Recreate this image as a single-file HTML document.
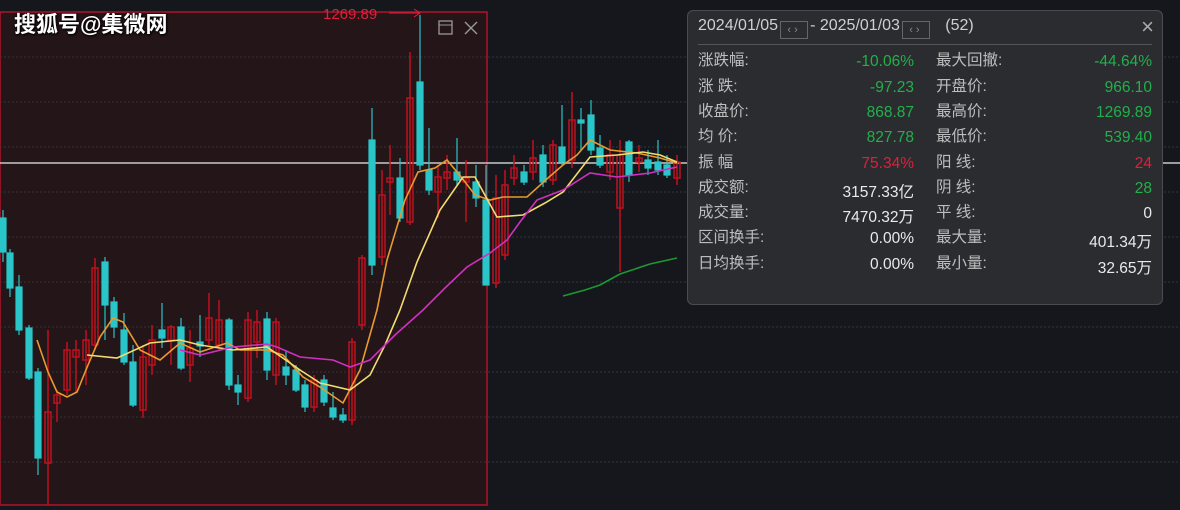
<!DOCTYPE html>
<html><head><meta charset="utf-8"><style>
body{margin:0;width:1180px;height:510px;background:#15171c;overflow:hidden;position:relative;font-family:"Liberation Sans","Noto Sans CJK SC",sans-serif}
svg{position:absolute;left:0;top:0}
.wm{position:absolute;left:14px;top:7px;color:#fff;font-size:22px;font-weight:bold;text-shadow:0 0 2px #000,1px 1px 2px #000}
.panel{position:absolute;left:687px;top:10px;width:476px;height:295px;background:#2b2c30;border:1px solid #4a4b50;border-radius:6px;box-sizing:border-box;color:#c8c8c8}
.hd{position:absolute;left:10px;top:6px;font-size:16px;color:#cfcfcf;white-space:nowrap}
.btn{display:inline-block;width:28px;height:18px;border:1px solid #666;vertical-align:-3px;font-size:11px;color:#888;text-align:center;line-height:16px;box-sizing:border-box;margin:0 2px;letter-spacing:3px}
.sep{position:absolute;left:10px;right:10px;top:33px;height:1px;background:#555}
.x{position:absolute;right:8px;top:3px;font-size:22px;color:#aaa}
.r{position:absolute;font-size:15.5px;white-space:nowrap}
.l{color:#bdbdbd}
.g{color:#22b04a}.red{color:#e0203a}.w{color:#eaeaea}
</style></head><body>
<svg width="1180" height="510">
<rect x="0" y="12" width="487" height="493" fill="#231518" stroke="#b0142a" stroke-width="1.5"/>
<g stroke="#33343a" stroke-dasharray="2 2" stroke-width="1">
<line x1="0" y1="57" x2="1180" y2="57"/><line x1="0" y1="102" x2="1180" y2="102"/><line x1="0" y1="147" x2="1180" y2="147"/><line x1="0" y1="192" x2="1180" y2="192"/><line x1="0" y1="237" x2="1180" y2="237"/><line x1="0" y1="282" x2="1180" y2="282"/><line x1="0" y1="327" x2="1180" y2="327"/><line x1="0" y1="372" x2="1180" y2="372"/><line x1="0" y1="417" x2="1180" y2="417"/><line x1="0" y1="462" x2="1180" y2="462"/>
</g>
<line x1="0" y1="163" x2="1180" y2="163" stroke="#c8c8c8" stroke-width="1.5"/>
<text x="323" y="19" fill="#e0203a" font-size="15" font-family="Liberation Sans">1269.89</text>
<line x1="389" y1="13" x2="420" y2="13" stroke="#e0203a"/><path d="M414 9 L420 13 L414 17" stroke="#e0203a" fill="none"/>
<rect x="439" y="21" width="13" height="13" fill="none" stroke="#999" stroke-width="1.3"/><line x1="439" y1="25" x2="452" y2="25" stroke="#999"/>
<path d="M465 22 L477 34 M477 22 L465 34" stroke="#999" stroke-width="1.4"/>
<g stroke="#2ac5c8" fill="#2ac5c8" stroke-width="1.2">
<line x1="3" y1="210" x2="3" y2="262"/><rect x="0" y="218" width="6" height="34"/>
<line x1="10" y1="249" x2="10" y2="297"/><rect x="7" y="253" width="6" height="35"/>
<line x1="19" y1="275" x2="19" y2="335"/><rect x="16" y="287" width="6" height="43"/>
<line x1="29" y1="325" x2="29" y2="380"/><rect x="26" y="328" width="6" height="50"/>
<line x1="38" y1="368" x2="38" y2="475"/><rect x="35" y="372" width="6" height="86"/>
<line x1="105" y1="257" x2="105" y2="340"/><rect x="102" y="262" width="6" height="43"/>
<line x1="114" y1="297" x2="114" y2="338"/><rect x="111" y="302" width="6" height="25"/>
<line x1="124" y1="313" x2="124" y2="365"/><rect x="121" y="330" width="6" height="32"/>
<line x1="133" y1="345" x2="133" y2="407"/><rect x="130" y="362" width="6" height="43"/>
<line x1="162" y1="303" x2="162" y2="348"/><rect x="159" y="330" width="6" height="8"/>
<line x1="181" y1="318" x2="181" y2="370"/><rect x="178" y="327" width="6" height="41"/>
<line x1="200" y1="315" x2="200" y2="357"/><rect x="197" y="342" width="6" height="4"/>
<line x1="229" y1="318" x2="229" y2="390"/><rect x="226" y="320" width="6" height="65"/>
<line x1="238" y1="375" x2="238" y2="405"/><rect x="235" y="385" width="6" height="7"/>
<line x1="267" y1="312" x2="267" y2="380"/><rect x="264" y="319" width="6" height="51"/>
<line x1="286" y1="350" x2="286" y2="385"/><rect x="283" y="367" width="6" height="8"/>
<line x1="296" y1="365" x2="296" y2="392"/><rect x="293" y="370" width="6" height="20"/>
<line x1="305" y1="380" x2="305" y2="412"/><rect x="302" y="385" width="6" height="22"/>
<line x1="324" y1="375" x2="324" y2="406"/><rect x="321" y="380" width="6" height="22"/>
<line x1="333" y1="392" x2="333" y2="420"/><rect x="330" y="408" width="6" height="9"/>
<line x1="343" y1="408" x2="343" y2="423"/><rect x="340" y="415" width="6" height="5"/>
<line x1="372" y1="108" x2="372" y2="275"/><rect x="369" y="140" width="6" height="125"/>
<line x1="400" y1="158" x2="400" y2="222"/><rect x="397" y="178" width="6" height="40"/>
<line x1="420" y1="15" x2="420" y2="170"/><rect x="417" y="82" width="6" height="83"/>
<line x1="429" y1="128" x2="429" y2="195"/><rect x="426" y="170" width="6" height="20"/>
<line x1="457" y1="138" x2="457" y2="185"/><rect x="454" y="172" width="6" height="8"/>
<line x1="476" y1="165" x2="476" y2="207"/><rect x="473" y="182" width="6" height="16"/>
<line x1="486" y1="165" x2="486" y2="285"/><rect x="483" y="200" width="6" height="85"/>
<line x1="524" y1="165" x2="524" y2="185"/><rect x="521" y="172" width="6" height="10"/>
<line x1="543" y1="145" x2="543" y2="187"/><rect x="540" y="155" width="6" height="27"/>
<line x1="562" y1="105" x2="562" y2="165"/><rect x="559" y="147" width="6" height="15"/>
<line x1="581" y1="108" x2="581" y2="150"/><rect x="578" y="120" width="6" height="3"/>
<line x1="591" y1="100" x2="591" y2="155"/><rect x="588" y="115" width="6" height="35"/>
<line x1="600" y1="135" x2="600" y2="168"/><rect x="597" y="148" width="6" height="17"/>
<line x1="629" y1="140" x2="629" y2="182"/><rect x="626" y="142" width="6" height="33"/>
<line x1="648" y1="150" x2="648" y2="175"/><rect x="645" y="160" width="6" height="8"/>
<line x1="658" y1="140" x2="658" y2="175"/><rect x="655" y="162" width="6" height="8"/>
<line x1="667" y1="155" x2="667" y2="178"/><rect x="664" y="165" width="6" height="10"/>
</g>
<g stroke="#c0101f" fill="none" stroke-width="1.5">
<line x1="48" y1="330" x2="48" y2="505"/><rect x="45" y="412" width="6" height="51"/>
<line x1="57" y1="390" x2="57" y2="422"/><rect x="54" y="395" width="6" height="8"/>
<line x1="67" y1="342" x2="67" y2="395"/><rect x="64" y="350" width="6" height="40"/>
<line x1="76" y1="340" x2="76" y2="392"/><rect x="73" y="350" width="6" height="7"/>
<line x1="86" y1="330" x2="86" y2="385"/><rect x="83" y="340" width="6" height="20"/>
<line x1="95" y1="258" x2="95" y2="350"/><rect x="92" y="268" width="6" height="77"/>
<line x1="143" y1="345" x2="143" y2="418"/><rect x="140" y="357" width="6" height="53"/>
<line x1="152" y1="325" x2="152" y2="375"/><rect x="149" y="340" width="6" height="25"/>
<line x1="171" y1="325" x2="171" y2="365"/><rect x="168" y="327" width="6" height="13"/>
<line x1="190" y1="330" x2="190" y2="382"/><rect x="187" y="348" width="6" height="17"/>
<line x1="209" y1="293" x2="209" y2="345"/><rect x="206" y="318" width="6" height="22"/>
<line x1="219" y1="300" x2="219" y2="350"/><rect x="216" y="320" width="6" height="25"/>
<line x1="248" y1="312" x2="248" y2="402"/><rect x="245" y="320" width="6" height="78"/>
<line x1="257" y1="310" x2="257" y2="358"/><rect x="254" y="322" width="6" height="20"/>
<line x1="276" y1="318" x2="276" y2="385"/><rect x="273" y="322" width="6" height="53"/>
<line x1="314" y1="375" x2="314" y2="412"/><rect x="311" y="380" width="6" height="27"/>
<line x1="352" y1="338" x2="352" y2="425"/><rect x="349" y="342" width="6" height="78"/>
<line x1="362" y1="255" x2="362" y2="330"/><rect x="359" y="258" width="6" height="67"/>
<line x1="382" y1="170" x2="382" y2="265"/><rect x="379" y="195" width="6" height="62"/>
<line x1="390" y1="145" x2="390" y2="215"/><rect x="387" y="178" width="6" height="4"/>
<line x1="410" y1="52" x2="410" y2="225"/><rect x="407" y="98" width="6" height="124"/>
<line x1="438" y1="165" x2="438" y2="218"/><rect x="435" y="177" width="6" height="15"/>
<line x1="447" y1="155" x2="447" y2="190"/><rect x="444" y="172" width="6" height="6"/>
<line x1="466" y1="160" x2="466" y2="222"/><rect x="463" y="178" width="6" height="4"/>
<line x1="496" y1="175" x2="496" y2="288"/><rect x="493" y="198" width="6" height="85"/>
<line x1="505" y1="170" x2="505" y2="260"/><rect x="502" y="185" width="6" height="70"/>
<line x1="514" y1="155" x2="514" y2="185"/><rect x="511" y="168" width="6" height="10"/>
<line x1="533" y1="140" x2="533" y2="180"/><rect x="530" y="158" width="6" height="14"/>
<line x1="553" y1="140" x2="553" y2="185"/><rect x="550" y="145" width="6" height="35"/>
<line x1="572" y1="92" x2="572" y2="168"/><rect x="569" y="120" width="6" height="40"/>
<line x1="610" y1="140" x2="610" y2="180"/><rect x="607" y="155" width="6" height="17"/>
<line x1="620" y1="140" x2="620" y2="272"/><rect x="617" y="155" width="6" height="53"/>
<line x1="639" y1="145" x2="639" y2="172"/><rect x="636" y="158" width="6" height="4"/>
<line x1="677" y1="155" x2="677" y2="185"/><rect x="674" y="162" width="6" height="16"/>
</g>
<g fill="none" stroke-width="1.6">
<polyline stroke="#e89a30" points="37,340 48,372 57,392 67,397 77,392 88,365 100,337 113,318 123,322 140,350 160,360 180,343 200,352 227,343 240,350 267,350 283,355 303,377 320,387 343,403 360,370 377,310 387,260 405,200 418,172 435,168 447,160 462,178 475,195 490,200 503,197 527,197 548,178 563,165 577,155 590,140 610,150 637,153 660,158 677,163"/>
<polyline stroke="#f2dc70" points="87,355 117,358 150,343 180,340 200,345 233,350 267,347 300,370 320,383 350,390 370,375 385,345 400,310 417,262 440,210 463,177 475,177 497,217 523,215 545,203 563,192 590,157 617,155 643,152 660,155 677,162"/>
<polyline stroke="#d030c0" points="180,350 200,355 233,347 267,344 277,347 300,357 333,360 350,367 370,360 395,335 423,310 445,288 467,267 490,253 507,240 520,222 537,200 563,190 590,173 617,177 650,173 677,167"/>
<polyline stroke="#1a9a30" points="563,296 585,290 600,285 620,274 650,264 677,258"/>
</g>
</svg>
<div class="wm">搜狐号@集微网</div>
<div class="panel">
<div class="hd">2024/01/05<span class="btn">‹›</span>- 2025/01/03<span class="btn">‹›</span> &nbsp;&nbsp;(52)</div>
<div class="x">×</div>
<div class="sep"></div>
<div class="r l" style="left:10px;top:37px">涨跌幅:</div><div class="r g" style="right:248px;top:42px">-10.06%</div>
<div class="r l" style="left:10px;top:63px">涨 跌:</div><div class="r g" style="right:248px;top:68px">-97.23</div>
<div class="r l" style="left:10px;top:88px">收盘价:</div><div class="r g" style="right:248px;top:93px">868.87</div>
<div class="r l" style="left:10px;top:113px">均 价:</div><div class="r g" style="right:248px;top:118px">827.78</div>
<div class="r l" style="left:10px;top:139px">振 幅</div><div class="r red" style="right:248px;top:144px">75.34%</div>
<div class="r l" style="left:10px;top:164px">成交额:</div><div class="r w" style="right:248px;top:169px">3157.33亿</div>
<div class="r l" style="left:10px;top:189px">成交量:</div><div class="r w" style="right:248px;top:194px">7470.32万</div>
<div class="r l" style="left:10px;top:214px">区间换手:</div><div class="r w" style="right:248px;top:219px">0.00%</div>
<div class="r l" style="left:10px;top:240px">日均换手:</div><div class="r w" style="right:248px;top:245px">0.00%</div>
<div class="r l" style="left:248px;top:37px">最大回撤:</div><div class="r g" style="right:10px;top:42px">-44.64%</div>
<div class="r l" style="left:248px;top:63px">开盘价:</div><div class="r g" style="right:10px;top:68px">966.10</div>
<div class="r l" style="left:248px;top:88px">最高价:</div><div class="r g" style="right:10px;top:93px">1269.89</div>
<div class="r l" style="left:248px;top:113px">最低价:</div><div class="r g" style="right:10px;top:118px">539.40</div>
<div class="r l" style="left:248px;top:139px">阳 线:</div><div class="r red" style="right:10px;top:144px">24</div>
<div class="r l" style="left:248px;top:164px">阴 线:</div><div class="r g" style="right:10px;top:169px">28</div>
<div class="r l" style="left:248px;top:189px">平 线:</div><div class="r w" style="right:10px;top:194px">0</div>
<div class="r l" style="left:248px;top:214px">最大量:</div><div class="r w" style="right:10px;top:219px">401.34万</div>
<div class="r l" style="left:248px;top:240px">最小量:</div><div class="r w" style="right:10px;top:245px">32.65万</div>
</div>
</body></html>
